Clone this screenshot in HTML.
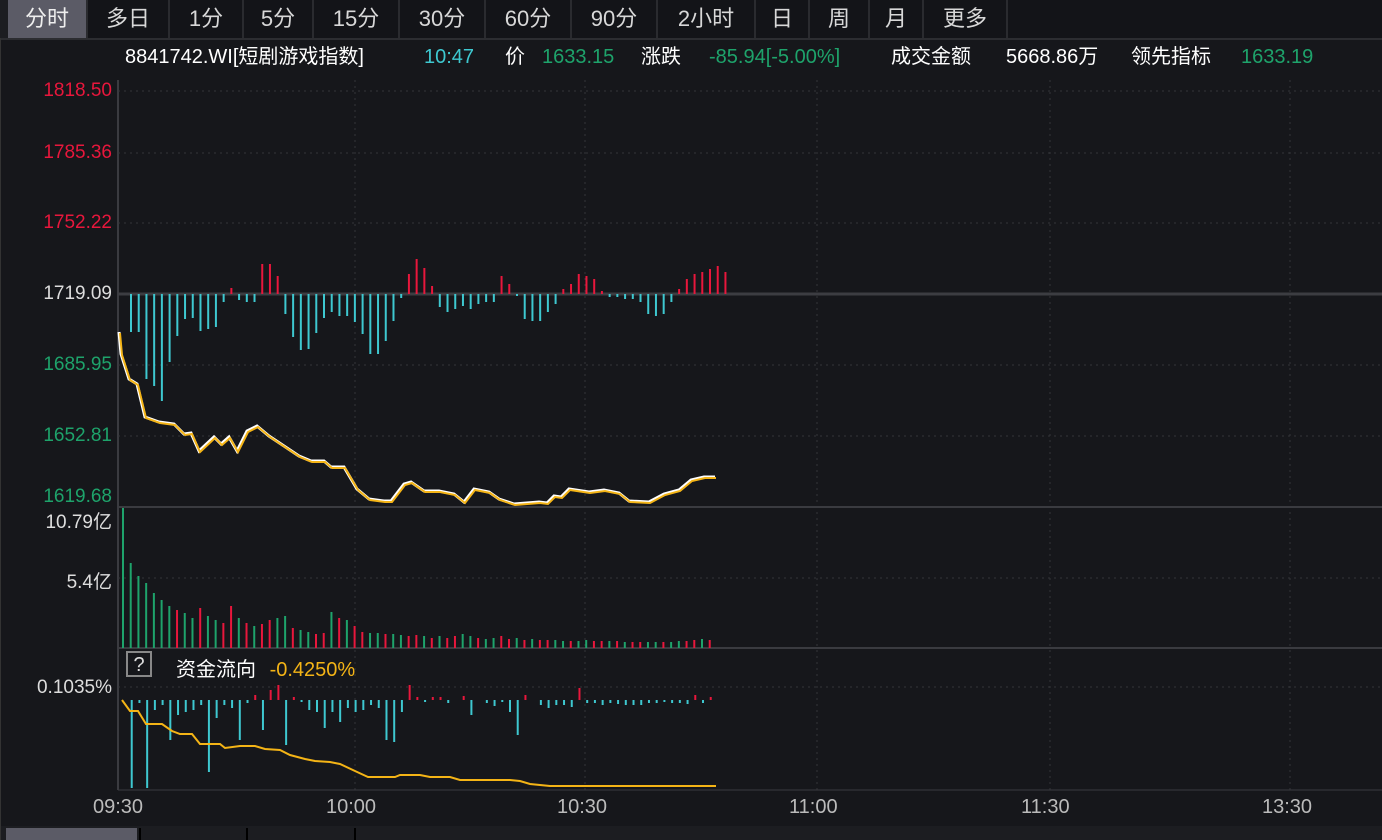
<!DOCTYPE html>
<html><head><meta charset="utf-8"><style>
body{margin:0;width:1382px;height:840px;background:#16171b;overflow:hidden;font-family:"Liberation Sans","Noto Sans CJK SC",sans-serif;color:#ddd}
#tabs{position:absolute;left:0;top:0;height:38px;width:1382px;background:#1c1d21;border-bottom:2px solid #2c2d31}
.t{position:absolute;top:0;height:38px;line-height:38px;font-size:22px;color:#d8d8d8;text-align:center;background:#131418;border-right:2px solid #2a2b2f}
#info{position:absolute;top:43px;left:125px;font-size:20px;white-space:pre;color:#fff;line-height:28px}
#info span{display:inline-block}
.lab{position:absolute;font-size:19px;left:0;width:112px;text-align:right}
.ax{position:absolute;top:796px;font-size:20px;color:#bbb}
</style></head><body>
<div id="tabs">
<div class="t" style="left:8px;width:78px;background:#5b5b66;color:#eee">分时</div>
<div class="t" style="left:88px;width:80px">多日</div>
<div class="t" style="left:170px;width:72px">1分</div>
<div class="t" style="left:244px;width:68px">5分</div>
<div class="t" style="left:314px;width:84px">15分</div>
<div class="t" style="left:400px;width:84px">30分</div>
<div class="t" style="left:486px;width:84px">60分</div>
<div class="t" style="left:572px;width:84px">90分</div>
<div class="t" style="left:658px;width:96px">2小时</div>
<div class="t" style="left:756px;width:52px">日</div>
<div class="t" style="left:810px;width:58px">周</div>
<div class="t" style="left:870px;width:52px">月</div>
<div class="t" style="left:924px;width:82px">更多</div>
<div class="t" style="left:1008px;width:374px;border:none"></div>
</div>
<div id="info"><span style="width:299px">8841742.WI[短剧游戏指数]</span><span style="width:81px;color:#3ec8d0">10:47</span><span style="width:37px">价</span><span style="width:99px;color:#1ea36b">1633.15</span><span style="width:68px">涨跌</span><span style="width:182px;color:#1ea36b">-85.94[-5.00%]</span><span style="width:115px">成交金额</span><span style="width:125px">5668.86万</span><span style="width:110px">领先指标</span><span style="color:#1ea36b">1633.19</span></div>
<div class="lab" style="top:80px;color:#e8173c">1818.50</div>
<div class="lab" style="top:142px;color:#e8173c">1785.36</div>
<div class="lab" style="top:212px;color:#e8173c">1752.22</div>
<div class="lab" style="top:283px;color:#ddd">1719.09</div>
<div class="lab" style="top:354px;color:#1ea36b">1685.95</div>
<div class="lab" style="top:425px;color:#1ea36b">1652.81</div>
<div class="lab" style="top:486px;color:#1ea36b">1619.68</div>
<div class="lab" style="top:507px;color:#ddd">10.79亿</div>
<div class="lab" style="top:567px;color:#ddd">5.4亿</div>
<div class="lab" style="top:677px;color:#ddd">0.1035%</div>
<div style="position:absolute;left:126px;top:651px;width:26px;height:26px;border:2px solid #888;box-sizing:border-box;text-align:center;font-size:20px;line-height:24px">?</div>
<div style="position:absolute;left:176px;top:653px;font-size:20px;color:#fff">资金流向 <span style="color:#f4b416;margin-left:8px">-0.4250%</span></div>
<div class="ax" style="left:93px">09:30</div>
<div class="ax" style="left:326px">10:00</div>
<div class="ax" style="left:557px">10:30</div>
<div class="ax" style="left:789px">11:00</div>
<div class="ax" style="left:1021px">11:30</div>
<div class="ax" style="left:1262px">13:30</div>
<div style="position:absolute;left:0;top:826px;width:1382px;height:14px;background:#1c1d21"></div>
<div style="position:absolute;left:6px;top:828px;width:131px;height:12px;background:#5b5b66"></div>
<div style="position:absolute;left:139px;top:828px;width:2px;height:12px;background:#000"></div>
<div style="position:absolute;left:246px;top:828px;width:2px;height:12px;background:#000"></div>
<div style="position:absolute;left:354px;top:828px;width:2px;height:12px;background:#000"></div>
<svg id="s" width="1382" height="840" style="position:absolute;left:0;top:0"></svg>
<script>
var s=document.getElementById('s'),h='';
function L(x1,y1,x2,y2,c,w,d){h+='<line x1="'+x1+'" y1="'+y1+'" x2="'+x2+'" y2="'+y2+'" stroke="'+c+'" stroke-width="'+(w||1)+'"'+(d?' stroke-dasharray="'+d+'"':'')+'/>';}
L(118,80,118,790,'#3a3b40',2);L(0,38,0,840,'#333',2);
[91,153,223,365,436,578,687].forEach(function(y){L(118,y,1382,y,'#34353a',1,'2 4');});
[355,585,817,1050,1290].forEach(function(x){L(x,80,x,790,'#34353a',1,'2 4');});
L(118,294,1382,294,'#3c3d42',3);
L(118,507,1382,507,'#3a3b40',2);L(118,648,1382,648,'#3a3b40',2);L(118,790,1382,790,'#3a3b40',1);
var tb=[-38,-38,-85,-92,-107,-68,-42,-25,-24,-37,-35,-33,-8,6,-6,-8,-8,30,30,18,-20,-43,-56,-55,-39,-24,-18,-22,-22,-28,-40,-60,-60,-47,-27,-4,20,35,26,8,-13,-18,-15,-12,-15,-10,-8,-8,18,10,-2,-25,-27,-27,-18,-10,5,10,20,18,15,3,-3,-3,-5,-5,-8,-20,-22,-20,-8,5,15,20,22,25,28,22];
tb.forEach(function(v,i){var x=131+i*7.72;L(x,294,x,294-v,v>0?'#e8173c':'#3ec8d0',2);});
var vb=[140,85,72,65,55,48,42,38,35,30,40,32,28,25,42,30,25,22,24,28,30,32,20,18,16,14,15,36,30,28,22,16,15,15,14,14,13,12,13,12,10,12,10,12,14,12,10,9,10,12,9,10,8,9,8,8,8,7,7,7,8,7,7,7,7,6,6,6,6,6,6,6,7,7,8,9,8];
vb.forEach(function(v,i){var x=123+i*7.72;L(x,648,x,648-v,(i%3==1||i%4==2)&&i>6?'#e8173c':'#1ea36b',2);});
var fb=[0,-88,-3,-88,-10,-5,-40,-15,-12,-10,-5,-72,-18,-5,-8,-40,-3,5,-30,10,15,-45,3,-2,-10,-12,-28,-12,-22,-8,-12,-10,-5,-8,-40,-42,-12,15,3,-2,3,3,-3,0,4,-15,0,-3,-6,-2,-12,-35,5,0,-5,-8,-5,-5,-7,12,-3,-3,-5,-3,-4,-5,-5,-5,-3,-3,-2,-3,-3,-4,5,-3,3];
fb.forEach(function(v,i){var x=124+i*7.72;L(x,700,x,700-v,v>0?'#e8173c':'#3ec8d0',2);});
var p="120,333 122,355 130,380 138,385 146,418 160,423 175,425 185,435 192,434 200,452 215,438 222,445 230,438 238,452 248,432 258,427 270,437 285,447 300,457 312,462 325,462 332,468 345,468 358,490 370,500 385,502 392,502 405,485 412,483 425,492 440,492 455,495 465,503 475,490 490,493 500,500 515,505 540,503 548,504 555,497 562,498 570,490 590,493 605,491 620,494 630,502 650,503 665,495 680,491 692,481 705,478 716,478";
h+='<polyline points="'+p+'" fill="none" stroke="#fff" stroke-width="3" transform="translate(-1,-1)"/>';
h+='<polyline points="'+p+'" fill="none" stroke="#f4b416" stroke-width="2"/>';
var f="122,700 130,711 138,711 146,724 162,724 172,731 180,734 192,734 200,744 220,744 225,748 240,746 255,746 265,749 280,750 290,755 305,759 315,761 330,762 340,764 355,771 368,777 395,777 400,775 420,775 430,777 450,777 460,780 510,780 520,781 530,784 550,786 716,786";
h+='<polyline points="'+f+'" fill="none" stroke="#f4b416" stroke-width="2"/>';
s.innerHTML=h;
</script>
</body></html>
